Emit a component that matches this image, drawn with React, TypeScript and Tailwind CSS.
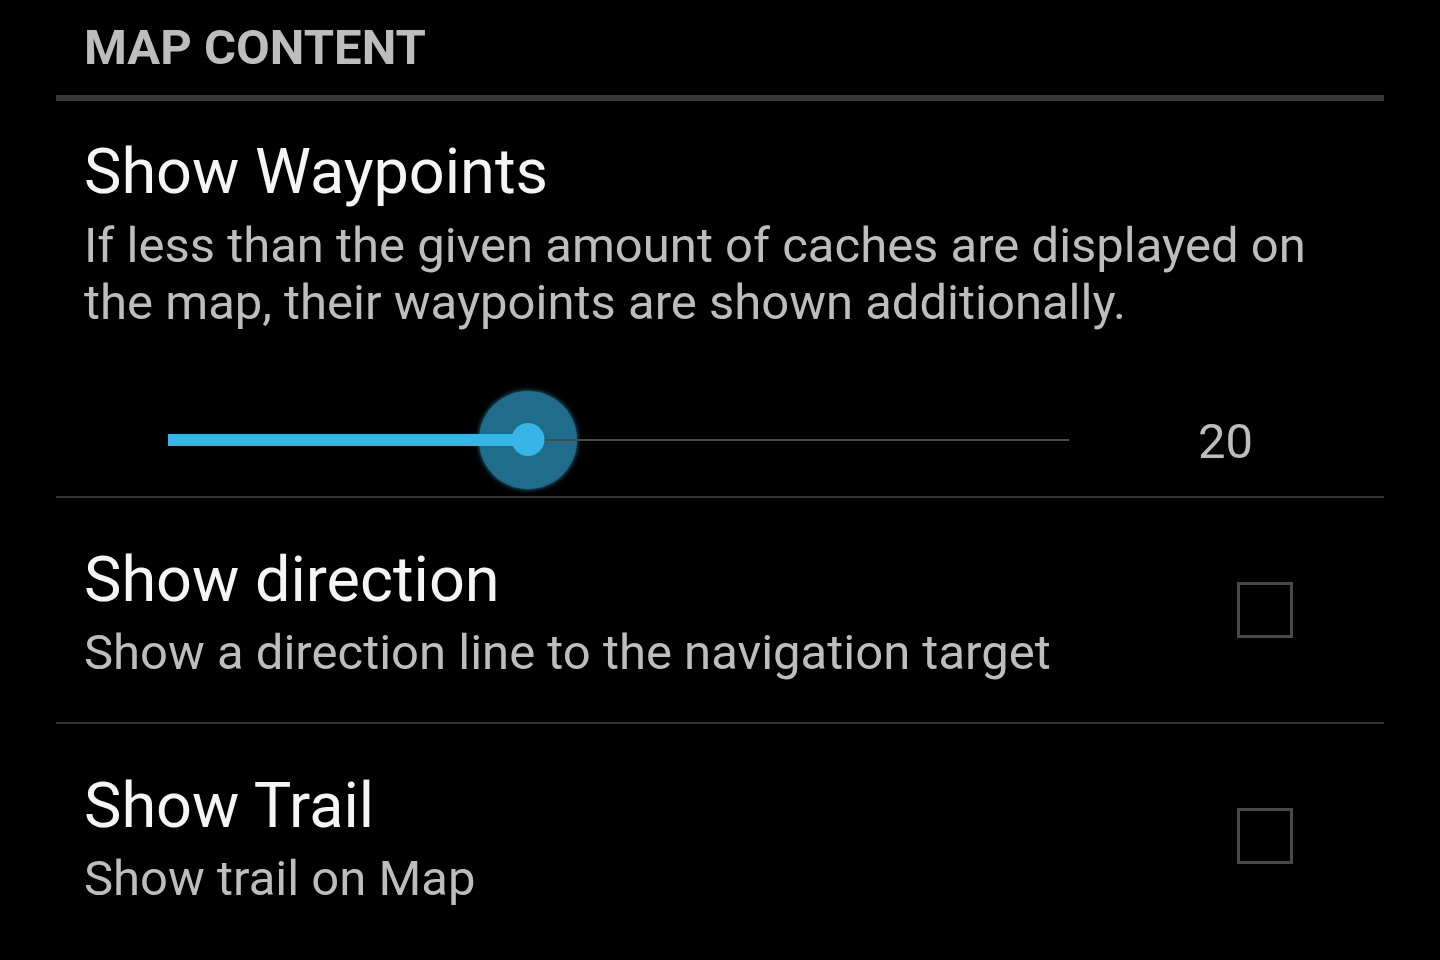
import React from 'react';

// --- Slider (Holo style seek bar) ---
const SeekBar = ({ value, max }: { value: number; max: number }) => {
  const pct = (value / max) * 100;
  return (
    <div className="relative h-[98px] w-[901px]">
      {/* halo behind the track */}
      <div
        className="absolute top-0 h-[98px] w-[98px] -translate-x-1/2 rounded-full bg-[#1f6d8a] shadow-[0_0_5px_rgba(51,181,229,0.7)]"
        style={{ left: `${pct}%` }}
      />
      <div className="absolute left-0 right-0 top-[48px] h-[2px] bg-[#4a4a4a]" />
      <div className="absolute left-0 top-[43px] h-[12px] bg-[#33b5e5]" style={{ width: `${pct}%` }} />
      <div
        className="absolute top-[32px] h-[33px] w-[33px] -translate-x-1/2 rounded-full bg-[#36b6e6]"
        style={{ left: `${pct}%` }}
      />
    </div>
  );
};

const CheckBox = () => (
  <div className="mb-[3px] h-[56px] w-[56px] shrink-0 border-[3px] border-[#494949]" />
);

const CheckPref = ({ title, summary }: { title: string; summary: string }) => (
  <div className="flex items-center pl-[28px] pr-[91px] pt-[44px] pb-[41px]">
    <div className="flex-1">
      <div className="text-[63px] leading-[76px] text-[#f5f5f5]">{title}</div>
      <div className="mt-[6px] text-[49px] leading-[57px] text-[#bdbdbd]">{summary}</div>
    </div>
    <CheckBox />
  </div>
);

const App: React.FC = () => {
  return (
    <div className="h-[960px] w-[1440px] overflow-hidden bg-black px-[56px] font-['Roboto',sans-serif]">
      <div className="pl-[28px] pt-[19px] text-[49px] font-bold leading-[58px] text-[#bdbdbd]">MAP CONTENT</div>
      <div className="mt-[18px] h-[6px] bg-[#3a3a3a]" />

      {/* Show Waypoints */}
      <div className="pt-[33px]">
        <div className="pl-[28px] text-[63px] leading-[76px] text-[#f5f5f5]">Show Waypoints</div>
        <div className="mt-[7px] pl-[28px] pr-[40px] text-[49px] leading-[57px] text-[#bdbdbd]">
          If less than the given amount of caches are displayed on the map, their waypoints are shown additionally.
        </div>
        <div className="mt-[60px] mb-[7px] flex items-center pl-[112px]">
          <SeekBar value={20} max={50} />
          <div className="ml-[129px] pt-[4px] text-[49px] leading-[58px] text-[#bdbdbd]">20</div>
        </div>
      </div>
      <div className="h-[2px] bg-[#333333]" />

      <CheckPref title="Show direction" summary="Show a direction line to the navigation target" />
      <div className="h-[2px] bg-[#333333]" />
      <CheckPref title="Show Trail" summary="Show trail on Map" />
    </div>
  );
};

export default App;
